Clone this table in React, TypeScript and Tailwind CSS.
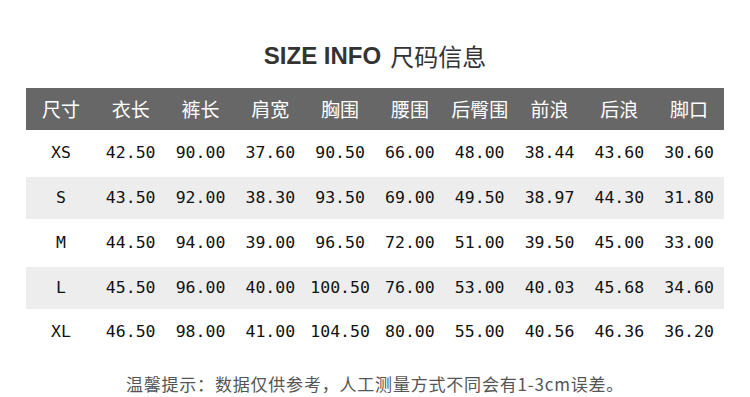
const headers = ['尺寸', '衣长', '裤长', '肩宽', '胸围', '腰围', '后臀围', '前浪', '后浪', '脚口'];

const rows = [
  { size: 'XS', h: 'h-[47px]', bg: 'bg-white', vals: ['42.50', '90.00', '37.60', '90.50', '66.00', '48.00', '38.44', '43.60', '30.60'] },
  { size: 'S', h: 'h-[42px]', bg: 'bg-[#ededed]', vals: ['43.50', '92.00', '38.30', '93.50', '69.00', '49.50', '38.97', '44.30', '31.80'] },
  { size: 'M', h: 'h-[48px]', bg: 'bg-white', vals: ['44.50', '94.00', '39.00', '96.50', '72.00', '51.00', '39.50', '45.00', '33.00'] },
  { size: 'L', h: 'h-[42px]', bg: 'bg-[#ededed]', vals: ['45.50', '96.00', '40.00', '100.50', '76.00', '53.00', '40.03', '45.68', '34.60'] },
  { size: 'XL', h: 'h-[46px]', bg: 'bg-white', vals: ['46.50', '98.00', '41.00', '104.50', '80.00', '55.00', '40.56', '46.36', '36.20'] },
];

const cjk = "font-['Noto_Sans_CJK_SC',sans-serif]";
const mono = "font-['DejaVu_Sans_Mono','Noto_Sans_CJK_SC',monospace]";

export default function App() {
  return (
    <div className="w-[750px] h-[397px] bg-white overflow-hidden">
      {/* title */}
      <div className="pt-[40px] h-[72px] flex items-center justify-center text-[#333]">
        <span className="font-['Liberation_Sans',sans-serif] font-bold text-[24px] leading-[32px]">SIZE INFO</span>
        <span className={`${cjk} text-[24px] leading-[32px] ml-[9px]`}>尺码信息</span>
      </div>

      {/* table */}
      <div className="mx-[26px] mt-[16px]">
        <div className="grid grid-cols-10 h-[42px] bg-[#676767] text-white">
          {headers.map((h) => (
            <div key={h} className={`${cjk} text-[19px] flex items-center justify-center`}>
              {h}
            </div>
          ))}
        </div>
        {rows.map((r) => (
          <div key={r.size} className={`grid grid-cols-10 ${r.h} ${r.bg} text-[#111]`}>
            <div className={`${mono} text-[16.5px] flex items-center justify-center`}>{r.size}</div>
            {r.vals.map((v, i) => (
              <div key={i} className={`${mono} text-[16.5px] flex items-center justify-center`}>
                {v}
              </div>
            ))}
          </div>
        ))}
      </div>

      {/* note */}
      <div className={`${cjk} mt-[17px] text-center text-[17px] leading-[24px] tracking-[0.8px] text-[#555]`}>
        温馨提示：数据仅供参考，人工测量方式不同会有1-3cm误差。
      </div>
    </div>
  );
}
